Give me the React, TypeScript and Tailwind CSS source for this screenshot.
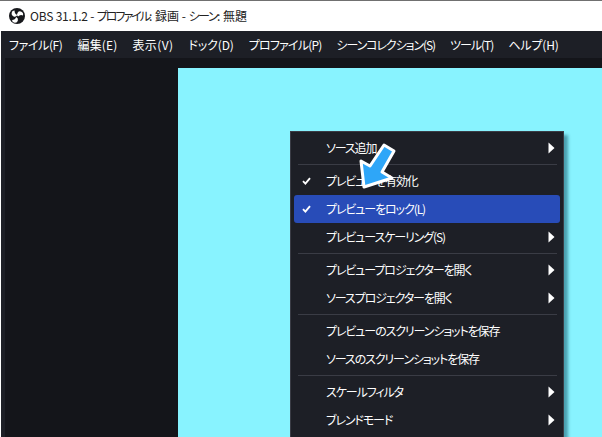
const menuBar = [
  { label: "ファイル(F)", track: "tracking-[-0.4px]" },
  { label: "編集(E)", track: "tracking-[0.15px]" },
  { label: "表示(V)", track: "tracking-[0.4px]" },
  { label: "ドック(D)", track: "tracking-[-0.15px]" },
  { label: "プロファイル(P)", track: "tracking-[-0.8px]" },
  { label: "シーンコレクション(S)", track: "tracking-[-1.1px]" },
  { label: "ツール(T)", track: "tracking-[-1px]" },
  { label: "ヘルプ(H)", track: "tracking-[-0.15px]" },
];

type Item = { label?: string; sub?: boolean; checked?: boolean; active?: boolean; sep?: boolean };

const items: Item[] = [
  { label: "ソース追加", sub: true },
  { sep: true },
  { label: "プレビューを有効化", checked: true },
  { label: "プレビューをロック(L)", checked: true, active: true },
  { label: "プレビュースケーリング(S)", sub: true },
  { sep: true },
  { label: "プレビュープロジェクターを開く", sub: true },
  { label: "ソースプロジェクターを開く", sub: true },
  { sep: true },
  { label: "プレビューのスクリーンショットを保存" },
  { label: "ソースのスクリーンショットを保存" },
  { sep: true },
  { label: "スケールフィルタ", sub: true },
  { label: "ブレンドモード", sub: true },
];

const ObsLogo = () => (
  <svg width="16" height="16" viewBox="0 0 16 16">
    <circle cx="8" cy="8" r="8" fill="#17181c" />
    <path d="M8.2 7 A3 3 0 1 1 5.6 2.6 A4.4 4.4 0 0 0 8.2 7 Z" fill="#fff" />
    <path d="M9 8.6 A3 3 0 1 1 13.9 7.4 A4.4 4.4 0 0 0 9 8.6 Z" fill="#fff" />
    <path d="M7.2 9 A3 3 0 1 1 3 12 A4.4 4.4 0 0 0 7.2 9 Z" fill="#fff" />
  </svg>
);

const MenuRow = ({ item }: { item: Item }) => {
  if (item.sep) {
    return (
      <div className="h-[5px] flex items-center pl-[7px] pr-[6px]">
        <div className="h-px w-full bg-[#3a3c45]" />
      </div>
    );
  }
  return (
    <div className={`h-[28px] mx-[3px] flex items-center rounded-[3px] ${item.active ? "bg-[#284cb8]" : ""}`}>
      <div className="w-[32px] flex pl-[8px]">
        {item.checked && (
          <svg width="9" height="8" viewBox="0 0 9 8">
            <path d="M1 4.2 L3.4 6.6 L8 1.2" fill="none" stroke="#fff" strokeWidth="1.9" />
          </svg>
        )}
      </div>
      <span className="flex-1 text-[12px] text-[#fefefe] whitespace-nowrap tracking-[-1.1px]">{item.label}</span>
      {item.sub && (
        <svg width="7" height="12" viewBox="0 0 7 12" className="mr-[5px]">
          <path d="M0.5 0.5 L6.5 6 L0.5 11.5 Z" fill="#fff" />
        </svg>
      )}
    </div>
  );
};

export default function App() {
  return (
    <div className="relative w-[602px] h-[437px] overflow-hidden flex flex-col bg-white font-['Noto_Sans_CJK_JP','Noto_Sans',sans-serif] [font-feature-settings:'palt']">
      <div className="h-[31px] shrink-0 flex items-center pl-[9px] gap-[5px] border-t border-[#707070] text-[12px] text-[#222] bg-white">
        <ObsLogo />
        <span className="whitespace-pre">
          <span className="tracking-[-0.2px]">OBS 31.1.2 - </span><span className="tracking-[-2px]">プロファイル</span>: 録画 - <span className="tracking-[-1.5px]">シーン</span>: 無題
        </span>
      </div>

      <div className="h-[27px] shrink-0 flex items-center gap-[15px] pl-[8px] ml-px bg-[#1d1f26] text-[12px] text-[#fefefe]">
        {menuBar.map((m) => (
          <span key={m.label} className={`whitespace-nowrap ${m.track}`}>{m.label}</span>
        ))}
      </div>

      <div className="flex-1 ml-px pl-[4px] flex bg-[#1d1f26]">
        <div className="flex-1 flex bg-[#14151a] pt-[10px] pl-[173px]">
          <div className="flex-1 bg-[#88f3ff]" />
        </div>
      </div>

      {/* context menu */}
      <div className="absolute left-[290px] top-[131px] w-[274px] h-[320px] pt-[2px] bg-[#1d1f26] border border-[#3a3c45] shadow-[4px_4px_3px_rgba(0,60,80,0.45)]">
        {items.map((item, i) => (
          <MenuRow key={i} item={item} />
        ))}
      </div>

      {/* annotation arrow */}
      <svg className="absolute left-[350px] top-[135px]" width="55" height="60" viewBox="0 0 55 60">
        <path
          d="M14 52 L11 26 L20 31 L34 10 L44 16 L32 37 L42 43 Z"
          fill="#2ea6f8"
          stroke="#fff"
          strokeWidth="3"
          strokeLinejoin="round"
        />
      </svg>
    </div>
  );
}
